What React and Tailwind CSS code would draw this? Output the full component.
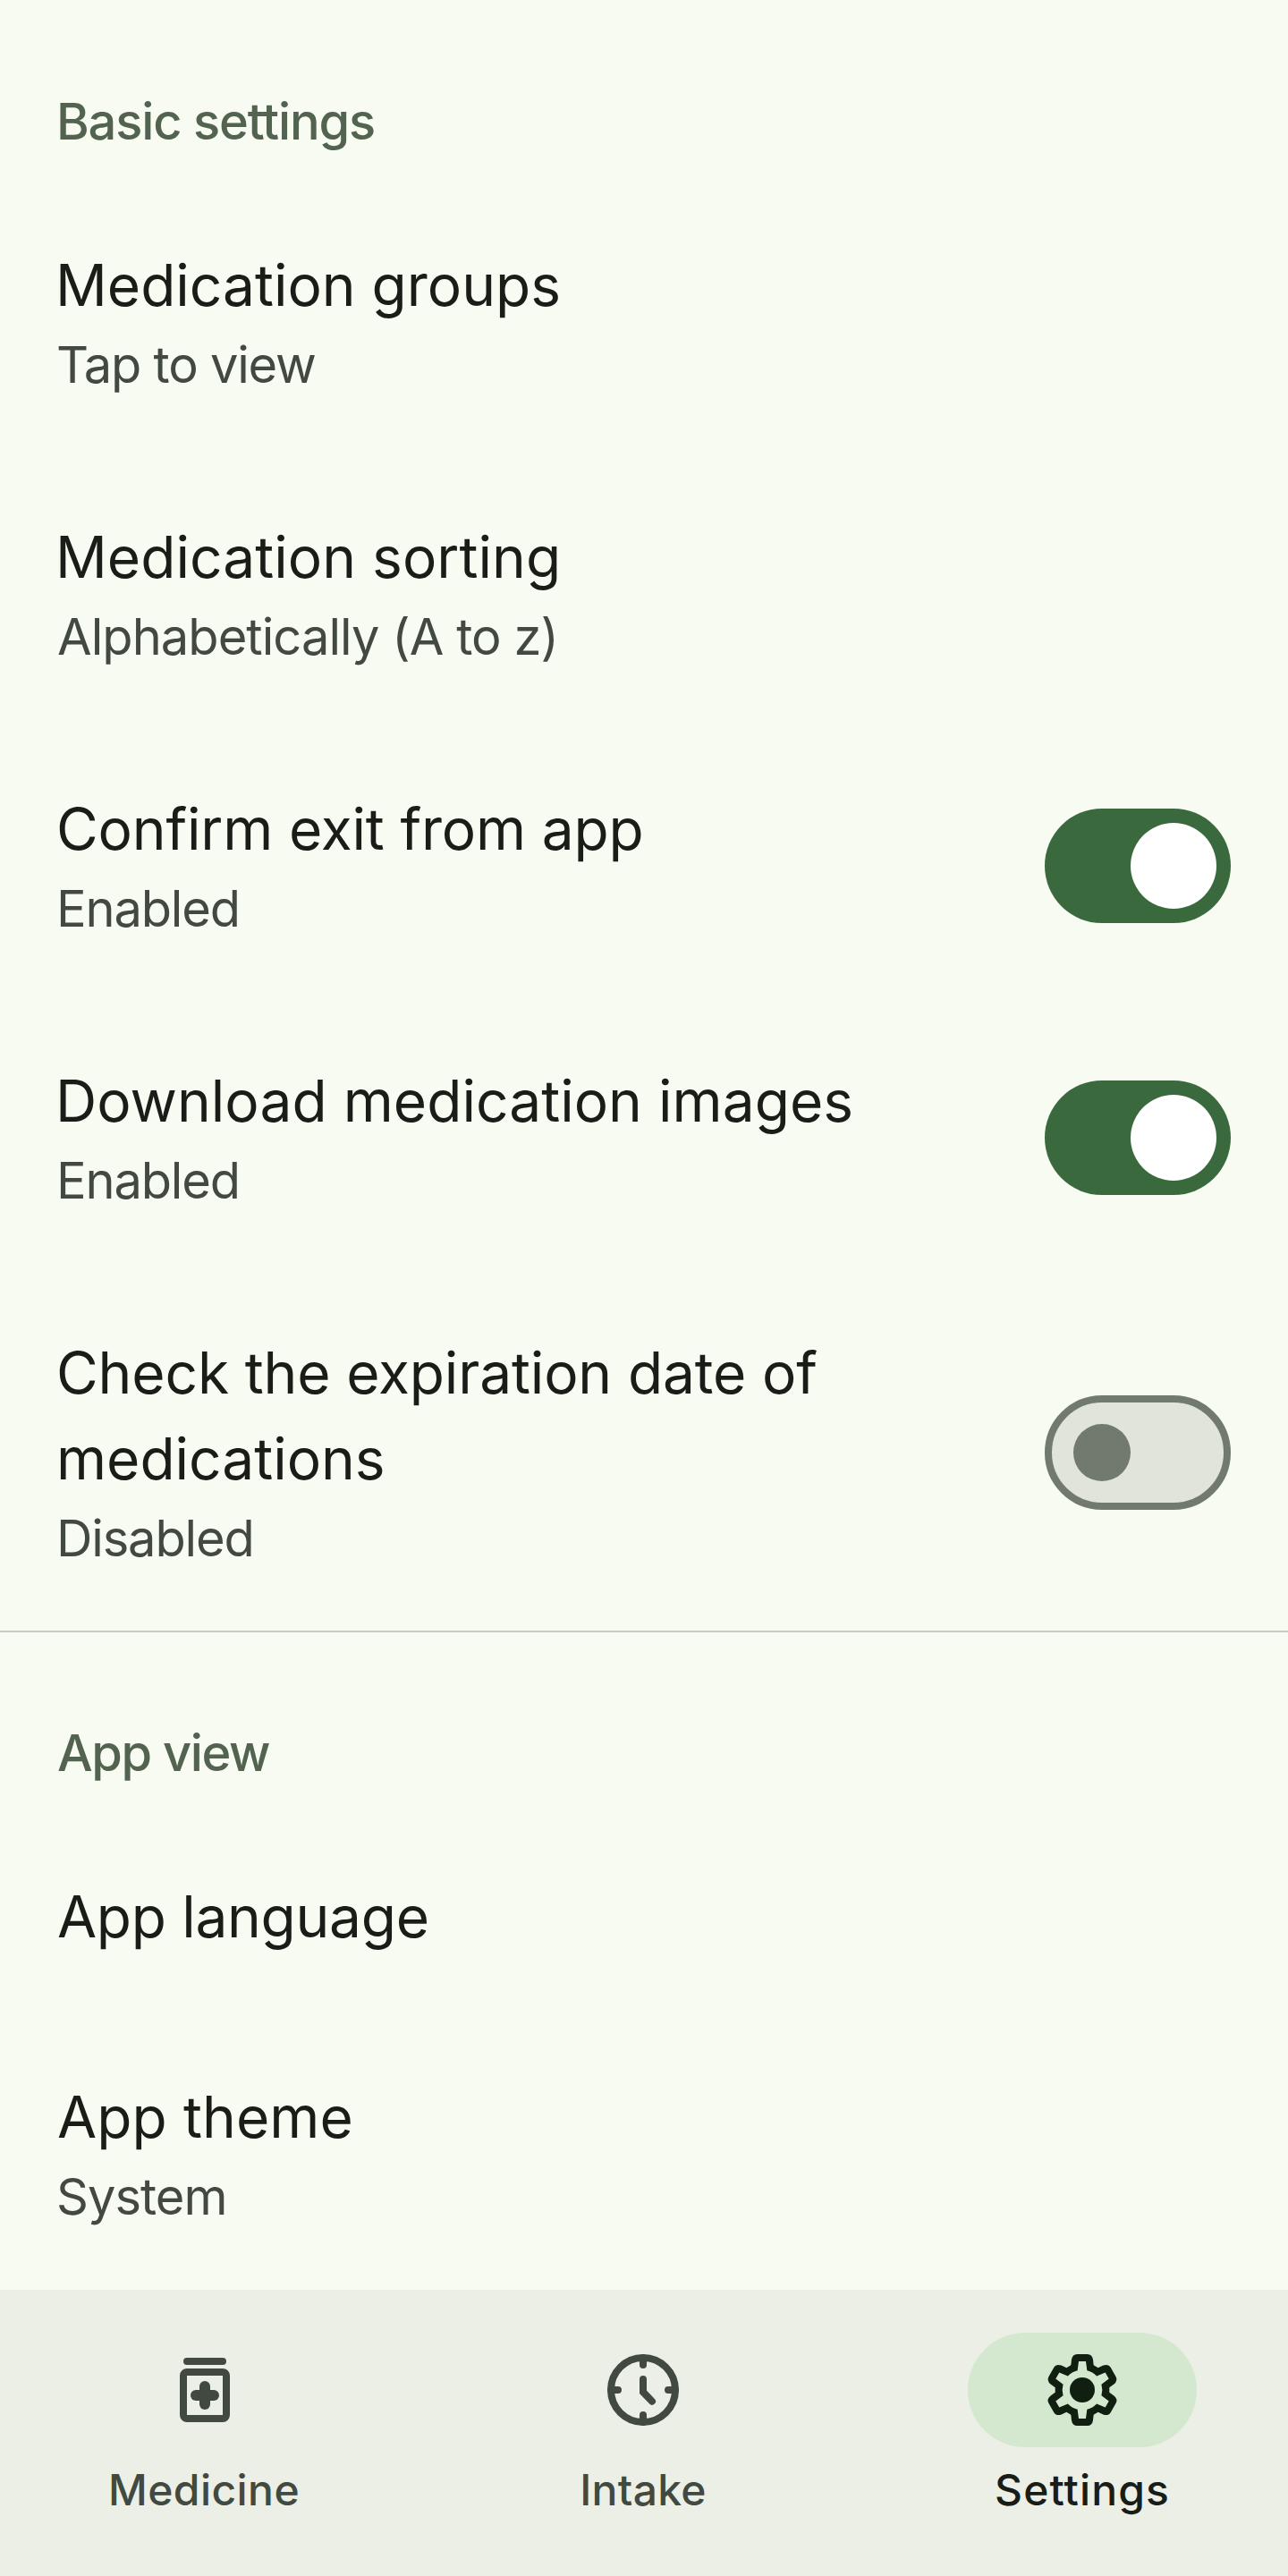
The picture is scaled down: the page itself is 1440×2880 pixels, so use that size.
import React from "react";

const INK = "text-[#181d18]";
const MUTED = "text-[#424940]";

function Toggle({ on }) {
  return on ? (
    <div className="flex h-32 w-52 shrink-0 items-center justify-end rounded-full bg-[#39693c] p-4">
      <div className="size-24 rounded-full bg-white" />
    </div>
  ) : (
    <div className="flex h-32 w-52 shrink-0 items-center rounded-full border-8 border-[#72796f] bg-[#e0e4db] pl-6">
      <div className="size-16 rounded-full bg-[#72796f]" />
    </div>
  );
}

function Heading({ children, tracking, top = "pt-24" }) {
  return (
    <h2 className={`px-16 pb-8 text-[56px] leading-[80px] font-medium text-[#52634f] ${top}`}>
      <span className={tracking}>{children}</span>
    </h2>
  );
}

function Row({ lines, summary, summaryTracking, toggle }) {
  return (
    <div className="flex items-center justify-between px-16 py-16">
      <div>
        <div className="-mt-px mb-px">
          {lines.map(([text, tracking]) => (
            <div key={text} className={`text-[64px] leading-[96px] whitespace-nowrap ${INK}`}>
              <span className={tracking}>{text}</span>
            </div>
          ))}
        </div>
        {summary && (
          <div className={`text-[56px] leading-[80px] whitespace-nowrap ${MUTED}`}>
            <span className={summaryTracking}>{summary}</span>
          </div>
        )}
      </div>
      {toggle !== undefined && <Toggle on={toggle} />}
    </div>
  );
}

function MedicineIcon() {
  return (
    <svg className="size-24" viewBox="-144 -144 288 288" fill="currentColor">
      <rect x="-72" y="-108" width="144" height="24" rx="12" />
      <path fillRule="evenodd" d="M-60-72H60A24 24 0 0 1 84-48V84A24 24 0 0 1 60 108H-60A24 24 0 0 1-84 84V-48A24 24 0 0 1-60-72ZM-60-48V84H60V-48Z" />
      <rect x="-48" y="0" width="96" height="36" rx="18" />
      <rect x="-18" y="-30" width="36" height="96" rx="18" />
    </svg>
  );
}

function ClockIcon() {
  return (
    <svg className="size-24" viewBox="-144 -144 288 288" fill="none" stroke="currentColor" strokeWidth="24" strokeLinecap="round">
      <circle r="108" />
      <path d="M0-108V-84M0 108V84M-108 0H-84M108 0H84M0-36V7L30 38" />
    </svg>
  );
}

function turn(x, y, k) {
  const a = (k * Math.PI) / 3;
  const c = Math.cos(a);
  const s = Math.sin(a);
  return `${(x * c - y * s).toFixed(2)} ${(x * s + y * c).toFixed(2)}`;
}

const teeth = [0, 1, 2, 3, 4, 5];
const gearOuter = teeth
  .map((k) => {
    const p = (x, y) => turn(x, y, k);
    return `${k ? "L" : "M"}${p(-38, -83)}L${p(-36, -102)}Q${p(-33, -120)} ${p(-17, -120)}L${p(17, -120)}Q${p(33, -120)} ${p(36, -102)}L${p(38, -83)}`;
  })
  .join("");
const gearInner = teeth
  .map((k) => {
    const p = (x, y) => turn(x, y, k);
    const head = k ? `A67 67 0 0 1 ${p(-16, -65)}` : `M${p(-16, -65)}`;
    return `${head}L${p(-12, -96)}L${p(12, -96)}L${p(16, -65)}`;
  })
  .join("");

function GearIcon() {
  return (
    <svg className="size-24" viewBox="-144 -144 288 288" fill="currentColor">
      <path fillRule="evenodd" d={`${gearOuter}Z${gearInner}A67 67 0 0 1 -16 -65Z`} />
      <circle r="42" />
    </svg>
  );
}

function Tab({ icon, label, tracking, active, className = "" }) {
  return (
    <div className={`flex w-[458px] flex-col items-center ${className}`}>
      <div className={`flex h-32 w-64 items-center justify-center rounded-full ${active ? "bg-[#d4e8cf] text-[#101f10]" : MUTED}`}>
        {icon}
      </div>
      <div className={`mt-4 text-[48px] leading-[64px] font-medium ${active ? INK : MUTED}`}>
        <span className={tracking}>{label}</span>
      </div>
    </div>
  );
}

export default function App() {
  return (
    <div className="flex h-[2880px] w-[1440px] flex-col overflow-hidden bg-[#f8fbf2] font-['Inter',sans-serif]">
      <main className="h-[2560px] overflow-hidden">
        <section>
          <Heading tracking="-ml-px tracking-[-1.17px]">Basic settings</Heading>
          <Row lines={[["Medication groups", "-ml-0.5 tracking-normal"]]} summary="Tap to view" summaryTracking="-ml-px tracking-[-1.23px]" />
          <Row lines={[["Medication sorting", "-ml-0.5 tracking-[0.05px]"]]} summary="Alphabetically (A to z)" summaryTracking="tracking-[-0.95px]" />
          <Row lines={[["Confirm exit from app", "-ml-px tracking-[-0.16px]"]]} summary="Enabled" summaryTracking="-ml-px tracking-[-1.17px]" toggle={true} />
          <Row lines={[["Download medication images", "-ml-0.5 tracking-[0.05px]"]]} summary="Enabled" summaryTracking="-ml-px tracking-[-1.17px]" toggle={true} />
          <Row
            lines={[["Check the expiration date of", "-ml-px tracking-[-0.14px]"], ["medications", "-ml-px tracking-normal"]]}
            summary="Disabled"
            summaryTracking="-ml-px tracking-[-1.15px]"
            toggle={false}
          />
        </section>
        <section className="-mt-px border-t-2 border-[#c8ccc4]">
          <Heading top="pt-[95px]" tracking="tracking-[-1.44px]">App view</Heading>
          <Row lines={[["App language", "tracking-[-0.31px]"]]} />
          <Row lines={[["App theme", "tracking-[0.1px]"]]} summary="System" summaryTracking="-ml-px tracking-[-1px]" />
        </section>
      </main>
      <nav className="flex h-80 gap-8 bg-[#ecefe6] pt-12">
        <Tab icon={<MedicineIcon />} label="Medicine" tracking="-ml-0.5 tracking-[0.43px]" />
        <Tab icon={<ClockIcon />} label="Intake" tracking="tracking-[0.3px]" />
        <Tab icon={<GearIcon />} label="Settings" tracking="tracking-[1.1px]" active className="ml-px" />
      </nav>
    </div>
  );
}
